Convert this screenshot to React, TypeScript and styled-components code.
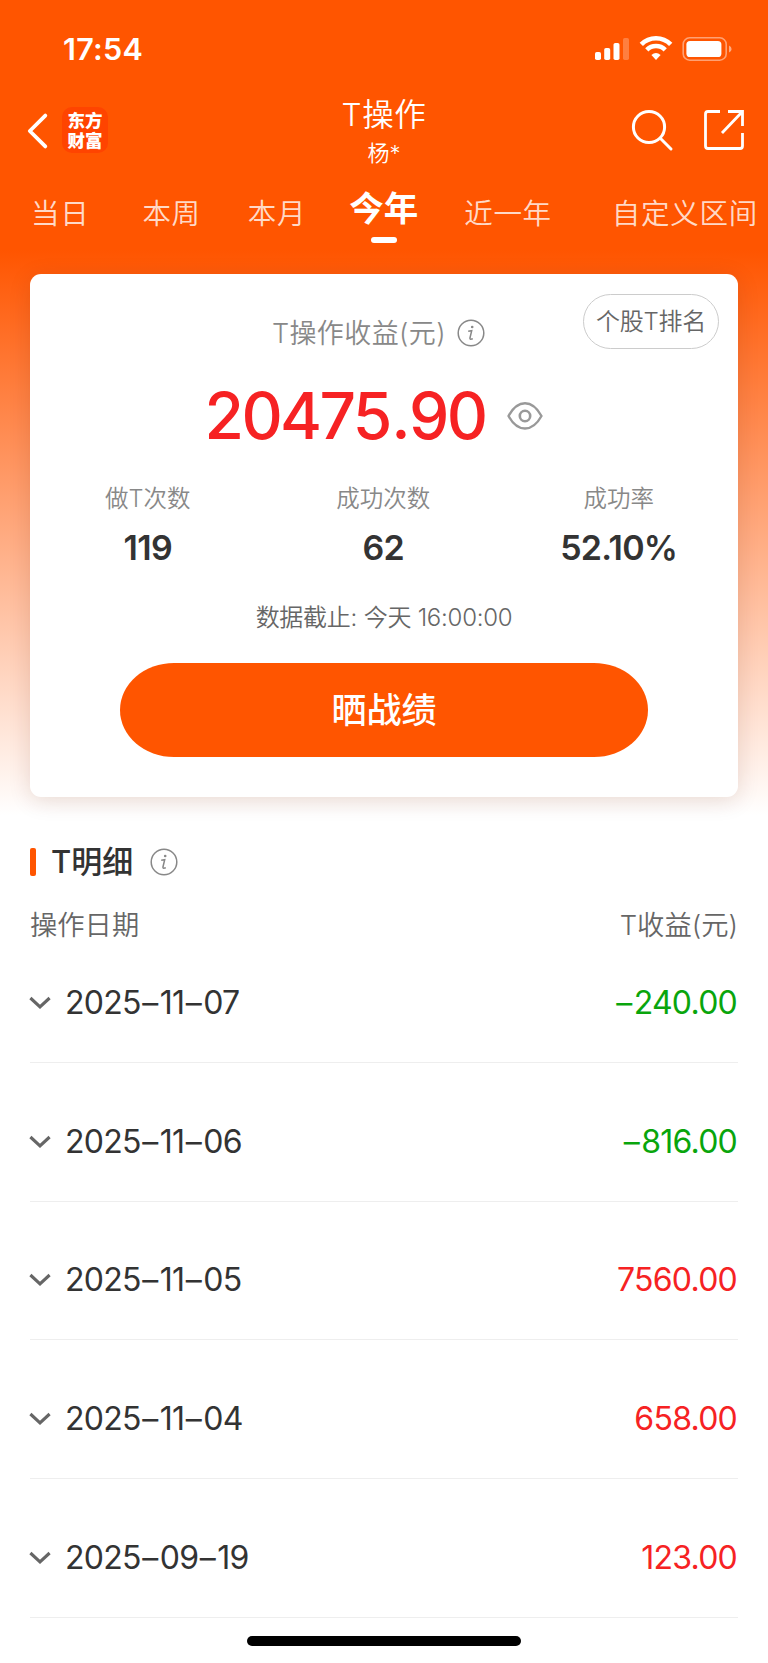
import React from "react";
import styled, { createGlobalStyle } from "styled-components";

const GlobalStyle = createGlobalStyle`
  *, *::before, *::after { box-sizing: border-box; }
  body {
    margin: 0;
    background: #fff;
    font-family: Inter, "Noto Sans CJK SC", sans-serif;
    color: #333;
  }
  button { font: inherit; background: none; border: 0; padding: 0; color: inherit; }
`;

const Page = styled.div`
  width: 768px;
  height: 1663px;
  overflow: hidden;
  display: flex;
  flex-direction: column;
  background: linear-gradient(to bottom, #ff5500 0, #ff5500 250px, #ffffff 815px);
`;

const StatusBar = styled.div`
  height: 92px;
  flex: none;
  display: flex;
  align-items: flex-start;
  justify-content: space-between;
  padding: 31px 36px 0 63px;
  color: #fff;
`;

const Clock = styled.span`
  font-size: 30.5px;
  line-height: 36px;
  font-weight: 600;
  letter-spacing: 0.3px;
`;

const StatusIcons = styled.svg`
  display: block;
  margin-top: 3px;
`;

const NavBar = styled.header`
  height: 92px;
  flex: none;
  display: grid;
  grid-template-columns: 1fr auto 1fr;
  padding: 0 22px;
  color: #fff;
`;

const NavLeft = styled.div`
  display: flex;
  align-items: flex-start;
  gap: 12px;
  padding: 15px 0 0 4px;
`;

const BackIcon = styled.svg`
  display: block;
  margin-top: 5px;
`;

const Logo = styled.div`
  width: 46px;
  height: 46px;
  padding: 3px 5px;
  border-radius: 10px;
  background: #ff4400;
  font-family: "Noto Sans CJK SC", sans-serif;
  font-size: 17.5px;
  line-height: 19.5px;
  font-weight: 900;
  text-align: center;
  word-break: break-all;
`;

const NavTitle = styled.div`
  display: flex;
  flex-direction: column;
  align-items: center;
`;

const Title = styled.h1`
  margin: 4px 0 0;
  font-size: 31.5px;
  line-height: 38px;
  font-weight: 350;
  letter-spacing: 0.6px;
`;

const Subtitle = styled.div`
  margin-top: 4px;
  font-size: 22px;
  line-height: 30px;
  font-weight: 350;
`;

const NavRight = styled.div`
  display: flex;
  justify-content: flex-end;
  gap: 28px;
  padding-top: 16px;
`;

const Tabs = styled.nav`
  height: 90px;
  flex: none;
  display: flex;
  padding-left: 31px;
`;

const Tab = styled.button<{ $active?: boolean; $before?: number }>`
  flex: none;
  display: flex;
  flex-direction: column;
  align-items: center;
  height: 62px;
  margin-left: ${(p) => p.$before ?? 0}px;
  padding-top: ${(p) => (p.$active ? 0 : 9)}px;
  font-size: ${(p) => (p.$active ? 34.5 : 28.5)}px;
  line-height: ${(p) => (p.$active ? 49 : 42)}px;
  font-weight: ${(p) => (p.$active ? 700 : 350)};
  letter-spacing: ${(p) => (p.$active ? 0 : 0.7)}px;
  color: ${(p) => (p.$active ? "#fff" : "rgba(255, 255, 255, 0.8)")};
  white-space: nowrap;
`;

const TabMark = styled.span`
  width: 26px;
  height: 6px;
  margin-top: 4px;
  border-radius: 3px;
  background: #fff;
`;

const Card = styled.section`
  position: relative;
  flex: none;
  width: 708px;
  height: 523px;
  margin: 0 30px;
  border-radius: 11px;
  background: #fff;
  box-shadow: 0 4px 22px rgba(90, 30, 0, 0.14);
  display: flex;
  flex-direction: column;
  align-items: center;
`;

const RankButton = styled.button`
  position: absolute;
  top: 20px;
  right: 19px;
  width: 136px;
  height: 55px;
  border: 1.5px solid #ccc;
  border-radius: 28px;
  font-size: 24px;
  line-height: 51px;
  font-weight: 350;
  letter-spacing: -0.3px;
  color: #666;
  white-space: nowrap;
`;

const ProfitLabel = styled.div`
  display: flex;
  align-items: center;
  gap: 11px;
  height: 40px;
  margin-top: 39px;
  padding-right: 11px;
  font-size: 27px;
  line-height: 42px;
  font-weight: 350;
  letter-spacing: 0.4px;
  color: #888;

  span { padding-top: 2px; }
`;

const Amount = styled.div`
  display: flex;
  align-items: center;
  gap: 22px;
  height: 76px;
  margin-top: 25px;
  padding-right: 20px;
`;

const AmountValue = styled.span`
  font-size: 64px;
  line-height: 76px;
  font-weight: 500;
  letter-spacing: -2.6px;
  color: #f62223;
`;

const Point = styled.span`
  margin: 0 1px 0 1.4px;
`;

const Stats = styled.div`
  width: 100%;
  display: grid;
  grid-template-columns: repeat(3, 1fr);
  margin-top: 26px;
  padding-right: 1.5px;
`;

const Stat = styled.div`
  display: flex;
  flex-direction: column;
  align-items: center;
`;

const StatLabel = styled.span`
  font-size: 23.5px;
  line-height: 37px;
  font-weight: 350;
  color: #888;
`;

const StatValue = styled.span`
  margin-top: 10px;
  font-size: 34px;
  line-height: 42px;
  font-weight: 600;
  letter-spacing: -0.7px;
  color: #333;
`;

const Deadline = styled.div`
  margin-top: 31px;
  font-size: 24px;
  line-height: 36px;
  font-weight: 350;
  letter-spacing: -0.25px;
  color: #666;
`;

const ShareButton = styled.button`
  width: 528px;
  height: 94px;
  margin-top: 27px;
  border-radius: 54px / 47px;
  background: #ff5500;
  color: #fff;
  font-size: 35px;
  line-height: 94px;
  font-weight: 500;
`;

const Details = styled.section`
  margin: 45px 30px 0;
  display: flex;
  flex-direction: column;
`;

const SectionTitle = styled.h2`
  margin: 0;
  height: 40px;
  display: flex;
  align-items: center;
  font-size: 31px;
  line-height: 40px;
  font-weight: 500;
  color: #333;

  &::before {
    content: "";
    width: 6px;
    height: 28px;
    margin-right: 15px;
    border-radius: 2px;
    background: #ff5500;
  }
  svg { margin-left: 16.5px; }
`;

const TableHead = styled.div`
  display: flex;
  justify-content: space-between;
  margin-top: 23px;
  font-size: 27.3px;
  line-height: 42px;
  font-weight: 350;
  color: #666;
`;

const Rows = styled.div`
  display: flex;
  flex-direction: column;
  margin-top: -23px;
`;

const Row = styled.div`
  display: flex;
  align-items: center;
  height: 138.8px;
  flex: none;
  padding-top: 20px;
  border-bottom: 1.5px solid #eee;
  font-size: 32px;
  line-height: 40px;
  font-weight: 400;
  letter-spacing: -0.75px;
  color: #333;

  svg { margin-left: -1.5px; }
`;

const RowDate = styled.span`
  margin-left: 12.5px;
  flex: 1;
`;

const RowValue = styled.span<{ $down: boolean }>`
  margin-right: 1px;
  color: ${(p) => (p.$down ? "#09a50c" : "#f62223")};
`;

const Dash = styled.span`
  margin: 0 2.2px 0 1.6px;
`;

const HomeBar = styled.div`
  flex: none;
  width: 274px;
  height: 10px;
  margin: 18px auto 0;
  border-radius: 5px;
  background: #000;
`;

const Figure = ({ text }: { text: string }) => (
  <>
    {text.split(/(–)/).map((part, i) => (part === "–" ? <Dash key={i}>–</Dash> : part))}
  </>
);

const InfoIcon = () => (
  <svg width="28" height="28" viewBox="0 0 28 28" fill="none">
    <circle cx="14" cy="14" r="12.8" stroke="#888" strokeWidth="1.5" />
    <circle cx="15.2" cy="8" r="1.3" fill="#888" />
    <path d="M11.2 12.3 L14.7 11.7 L12.9 19.2 Q12.7 20.8 15.8 19.8" stroke="#888" strokeWidth="1.5" />
  </svg>
);

const EyeIcon = () => (
  <svg width="36" height="28" viewBox="0 0 36 28" fill="none" stroke="#999" strokeWidth="2.4">
    <path d="M1.5 14 C6.5 5 12 1.3 18 1.3 C24 1.3 29.5 5 34.5 14 C29.5 23 24 26.5 18 26.5 C12 26.5 6.5 23 1.5 14 Z" strokeLinejoin="round" />
    <circle cx="18" cy="14" r="5.2" strokeWidth="2.6" />
  </svg>
);

const ChevronIcon = () => (
  <svg width="24" height="14" viewBox="0 0 24 14" fill="none">
    <path d="M1.4 2 L11 11 L20.6 2" stroke="#666" strokeWidth="3.1" />
  </svg>
);

const tabs = [
  { label: "当日", before: 0 },
  { label: "本周", before: 53 },
  { label: "本月", before: 47 },
  { label: "今年", before: 43, active: true },
  { label: "近一年", before: 46 },
  { label: "自定义区间", before: 60 },
];

const stats = [
  { label: "做T次数", value: "119" },
  { label: "成功次数", value: "62" },
  { label: "成功率", value: "52.10%" },
];

const records = [
  { date: "2025–11–07", value: "–240.00" },
  { date: "2025–11–06", value: "–816.00" },
  { date: "2025–11–05", value: "7560.00" },
  { date: "2025–11–04", value: "658.00" },
  { date: "2025–09–19", value: "123.00" },
];

export default function App() {
  return (
    <>
      <GlobalStyle />
      <Page>
        <StatusBar>
          <Clock>17:54</Clock>
          <StatusIcons width="138" height="28" viewBox="0 0 138 28" fill="#fff">
            <rect x="1" y="18" width="6" height="8" rx="1.8" />
            <rect x="10.2" y="14" width="6" height="12" rx="1.8" />
            <rect x="19.5" y="9" width="6" height="17" rx="1.8" />
            <rect x="29" y="4" width="6" height="22" rx="1.8" opacity="0.25" />
            <g fill="none" stroke="#fff" strokeWidth="4.6">
              <path d="M47.3 10.4 A20.5 20.5 0 0 1 76.7 10.4" />
              <path d="M52.8 15.8 A13 13 0 0 1 71.2 15.8" />
            </g>
            <path d="M57.4 21 Q62 17 66.6 21 L62 26 Z" />
            <rect x="89.2" y="3.8" width="43" height="22.4" rx="6.5" fill="none" stroke="#fff" strokeWidth="1.6" opacity="0.45" />
            <rect x="92.4" y="7" width="35" height="16" rx="3.6" />
            <path d="M135 11.4 Q137.6 12.6 137.6 15 Q137.6 17.4 135 18.6 Z" opacity="0.5" />
          </StatusIcons>
        </StatusBar>

        <NavBar>
          <NavLeft>
            <BackIcon width="24" height="38" viewBox="0 0 24 38" fill="none">
              <path d="M19.3 3.6 L3.8 19 L19.3 34.4" stroke="#fff" strokeWidth="3.8" strokeLinecap="round" strokeLinejoin="round" />
            </BackIcon>
            <Logo>东方财富</Logo>
          </NavLeft>
          <NavTitle>
            <Title>T操作</Title>
            <Subtitle>杨*</Subtitle>
          </NavTitle>
          <NavRight>
            <svg width="44" height="44" viewBox="0 0 44 44" fill="none" stroke="#fff" strokeWidth="3" strokeLinecap="round">
              <circle cx="19" cy="19" r="15.6" />
              <path d="M30.3 30.3 L41 41" />
            </svg>
            <svg width="44" height="44" viewBox="0 0 44 44" fill="none" stroke="#fff" strokeWidth="2.8">
              <path d="M18 3.5 H6 Q3.5 3.5 3.5 6 V38 Q3.5 40.5 6 40.5 H38 Q40.5 40.5 40.5 38 V25" />
              <path d="M26 3.5 H40.5 V18 M40 4 L20 25" />
            </svg>
          </NavRight>
        </NavBar>

        <Tabs>
          {tabs.map((t) => (
            <Tab key={t.label} $active={t.active} $before={t.before}>
              {t.label}
              {t.active && <TabMark />}
            </Tab>
          ))}
        </Tabs>

        <Card>
          <RankButton>个股T排名</RankButton>
          <ProfitLabel>
            <span>T操作收益(元)</span>
            <InfoIcon />
          </ProfitLabel>
          <Amount>
            <AmountValue>
              20475<Point>.</Point>90
            </AmountValue>
            <EyeIcon />
          </Amount>
          <Stats>
            {stats.map((s) => (
              <Stat key={s.label}>
                <StatLabel>{s.label}</StatLabel>
                <StatValue>{s.value}</StatValue>
              </Stat>
            ))}
          </Stats>
          <Deadline>数据截止: 今天 16:00:00</Deadline>
          <ShareButton>晒战绩</ShareButton>
        </Card>

        <Details>
          <SectionTitle>
            T明细
            <InfoIcon />
          </SectionTitle>
          <TableHead>
            <span>操作日期</span>
            <span>T收益(元)</span>
          </TableHead>
          <Rows>
            {records.map((r) => (
              <Row key={r.date}>
                <ChevronIcon />
                <RowDate>
                  <Figure text={r.date} />
                </RowDate>
                <RowValue $down={r.value.startsWith("–")}>
                  <Figure text={r.value} />
                </RowValue>
              </Row>
            ))}
          </Rows>
        </Details>
        <HomeBar />
      </Page>
    </>
  );
}
